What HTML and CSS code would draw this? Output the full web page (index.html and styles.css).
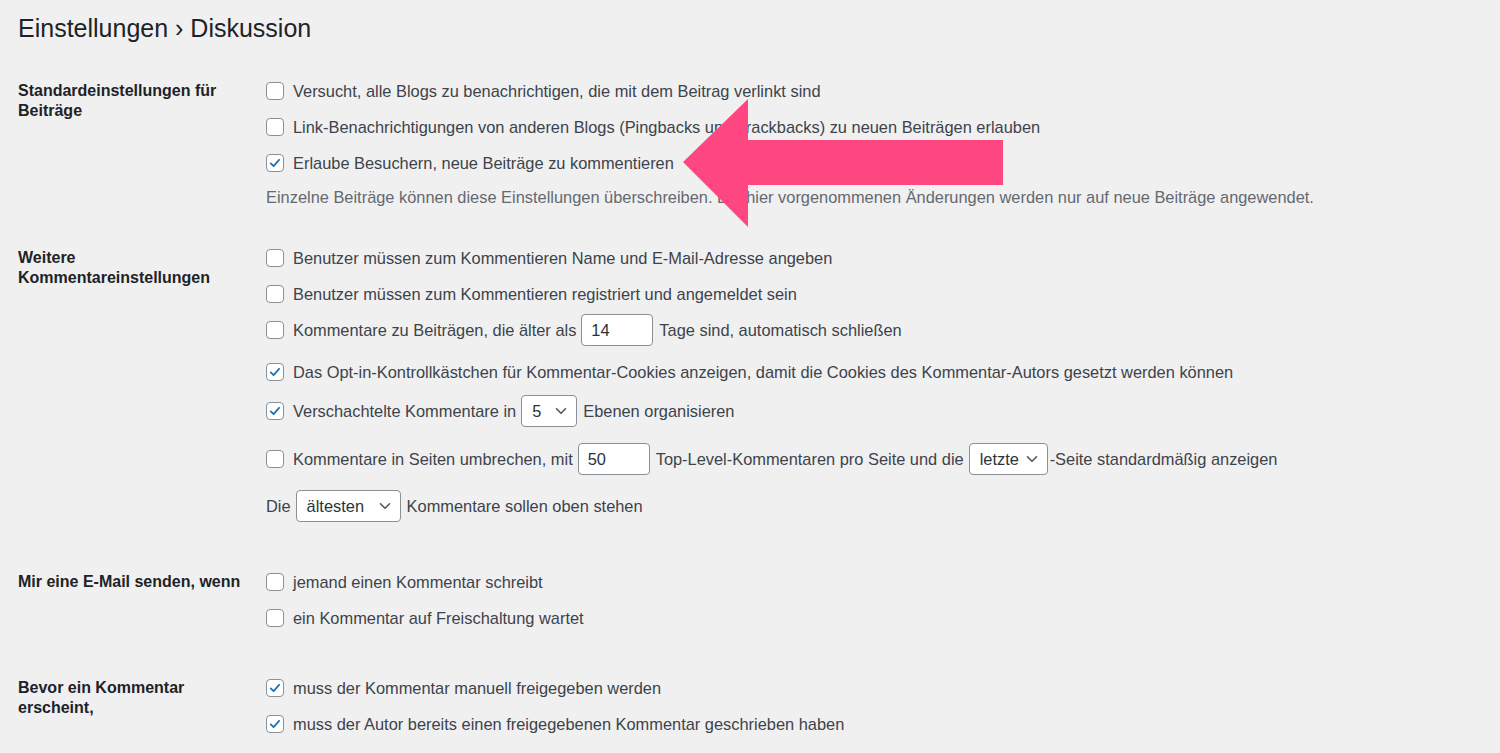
FILE: index.html
```html
<!DOCTYPE html>
<html lang="de">
<head>
<meta charset="utf-8">
<title>Einstellungen › Diskussion</title>
<link rel="stylesheet" href="styles.css">
</head>
<body>
<div class="wrap">
  <h1 class="title">Einstellungen › Diskussion</h1>

  <section class="row sec-1">
    <div class="th">Standardeinstellungen für Beiträge</div>
    <div class="td">
      <div class="line"><span class="cb"></span>Versucht, alle Blogs zu benachrichtigen, die mit dem Beitrag verlinkt sind</div>
      <div class="line"><span class="cb"></span>Link-Benachrichtigungen von anderen Blogs (Pingbacks und Trackbacks) zu neuen Beiträgen erlauben</div>
      <div class="line"><span class="cb on"><svg viewBox="0 0 18 18"><path d="M4.2 9.4 L7.4 12.6 L13.6 5.4" /></svg></span>Erlaube Besuchern, neue Beiträge zu kommentieren</div>
      <div class="line desc">Einzelne Beiträge können diese Einstellungen überschreiben. Die hier vorgenommenen Änderungen werden nur auf neue Beiträge angewendet.</div>
    </div>
  </section>

  <section class="row sec-2">
    <div class="th">Weitere Kommentareinstellungen</div>
    <div class="td">
      <div class="line"><span class="cb"></span>Benutzer müssen zum Kommentieren Name und E-Mail-Adresse angeben</div>
      <div class="line"><span class="cb"></span>Benutzer müssen zum Kommentieren registriert und angemeldet sein</div>
      <div class="line"><span class="cb"></span>Kommentare zu Beiträgen, die älter als <input class="num" type="text" value="14"> Tage sind, automatisch schließen</div>
      <div class="line mt-6"><span class="cb on"><svg viewBox="0 0 18 18"><path d="M4.2 9.4 L7.4 12.6 L13.6 5.4" /></svg></span>Das Opt-in-Kontrollkästchen für Kommentar-Cookies anzeigen, damit die Cookies des Kommentar-Autors gesetzt werden können</div>
      <div class="line mt-3"><span class="cb on"><svg viewBox="0 0 18 18"><path d="M4.2 9.4 L7.4 12.6 L13.6 5.4" /></svg></span>Verschachtelte Kommentare in <span class="sel w-5">5<svg class="chev" viewBox="0 0 12 8"><path d="M1.5 1.8 L6 6.2 L10.5 1.8" /></svg></span> Ebenen organisieren</div>
      <div class="line mt-12"><span class="cb"></span>Kommentare in Seiten umbrechen, mit <input class="num" type="text" value="50"> Top-Level-Kommentaren pro Seite und die <span class="sel w-letzte">letzte<svg class="chev" viewBox="0 0 12 8"><path d="M1.5 1.8 L6 6.2 L10.5 1.8" /></svg></span>-Seite standardmäßig anzeigen</div>
      <div class="line mt-11">Die <span class="sel w-alt">ältesten<svg class="chev" viewBox="0 0 12 8"><path d="M1.5 1.8 L6 6.2 L10.5 1.8" /></svg></span> Kommentare sollen oben stehen</div>
    </div>
  </section>

  <section class="row sec-3">
    <div class="th">Mir eine E-Mail senden, wenn</div>
    <div class="td">
      <div class="line"><span class="cb"></span>jemand einen Kommentar schreibt</div>
      <div class="line"><span class="cb"></span>ein Kommentar auf Freischaltung wartet</div>
    </div>
  </section>

  <section class="row sec-4">
    <div class="th">Bevor ein Kommentar erscheint,</div>
    <div class="td">
      <div class="line"><span class="cb on"><svg viewBox="0 0 18 18"><path d="M4.2 9.4 L7.4 12.6 L13.6 5.4" /></svg></span>muss der Kommentar manuell freigegeben werden</div>
      <div class="line"><span class="cb on"><svg viewBox="0 0 18 18"><path d="M4.2 9.4 L7.4 12.6 L13.6 5.4" /></svg></span>muss der Autor bereits einen freigegebenen Kommentar geschrieben haben</div>
    </div>
  </section>
</div>

<svg class="arrow" viewBox="0 0 1500 753" aria-hidden="true">
  <polygon points="683,162 748,99 748,140 1003,140 1003,185 748,185 748,227" />
</svg>
</body>
</html>
```

FILE: styles.css
```css
html, body {
  margin: 0;
  padding: 0;
  background: #f0f0f1;
}

body {
  width: 1500px;
  height: 753px;
  overflow: hidden;
  position: relative;
  font-family: "Liberation Sans", Arial, sans-serif;
  font-size: 16.4px;
  color: #3c434a;
}

.wrap {
  padding-left: 18px;
}

.title {
  margin: 0;
  padding-top: 11px;
  height: 73px;
  box-sizing: border-box;
  font-size: 25px;
  line-height: 34px;
  font-weight: 400;
  color: #1d2327;
}

.row {
  display: flex;
}

.th {
  width: 248px;
  flex: none;
  padding-top: 8px;
  padding-right: 20px;
  box-sizing: border-box;
  font-size: 16px;
  font-weight: 700;
  line-height: 20px;
  color: #1d2327;
}

.td {
  display: flex;
  flex-direction: column;
}

.line {
  height: 36px;
  display: flex;
  align-items: center;
  white-space: nowrap;
}

.line.desc {
  height: 32px;
  color: #646970;
}

.sec-2 { margin-top: 27px; }
.sec-3 { margin-top: 40px; }
.sec-4 { margin-top: 34px; }

.mt-6 { margin-top: 6px; }
.mt-3 { margin-top: 3px; }
.mt-12 { margin-top: 12px; }
.mt-11 { margin-top: 11px; }

.cb {
  width: 18px;
  height: 18px;
  box-sizing: border-box;
  border: 1px solid #8c8f94;
  border-radius: 4px;
  background: #fff;
  margin-right: 9px;
  flex: none;
  display: flex;
}

.cb svg {
  width: 16px;
  height: 16px;
}

.cb svg path {
  fill: none;
  stroke: #2271b1;
  stroke-width: 2;
  stroke-linecap: round;
  stroke-linejoin: round;
}

.num {
  width: 72px;
  height: 32px;
  box-sizing: border-box;
  border: 1px solid #8c8f94;
  border-radius: 4px;
  background: #fff;
  margin: 0 6px 0 5px;
  padding: 0 9px;
  font: inherit;
  color: #2c3338;
}

.sel {
  height: 32px;
  box-sizing: border-box;
  border: 1px solid #8c8f94;
  border-radius: 4px;
  background: #fff;
  display: inline-flex;
  align-items: center;
  justify-content: space-between;
  padding: 0 9px 0 10px;
  margin: 0 6px 0 5px;
  color: #2c3338;
}

.w-5 { width: 56px; }
.w-letzte { width: 79px; margin-right: 2px; }
.w-alt { width: 105px; }

.chev {
  width: 12px;
  height: 8px;
  flex: none;
}

.chev path {
  fill: none;
  stroke: #50575e;
  stroke-width: 1.6;
  stroke-linecap: round;
  stroke-linejoin: round;
}

.arrow {
  position: absolute;
  left: 0;
  top: 0;
  width: 1500px;
  height: 753px;
  pointer-events: none;
}

.arrow polygon {
  fill: #fe4680;
}
```
